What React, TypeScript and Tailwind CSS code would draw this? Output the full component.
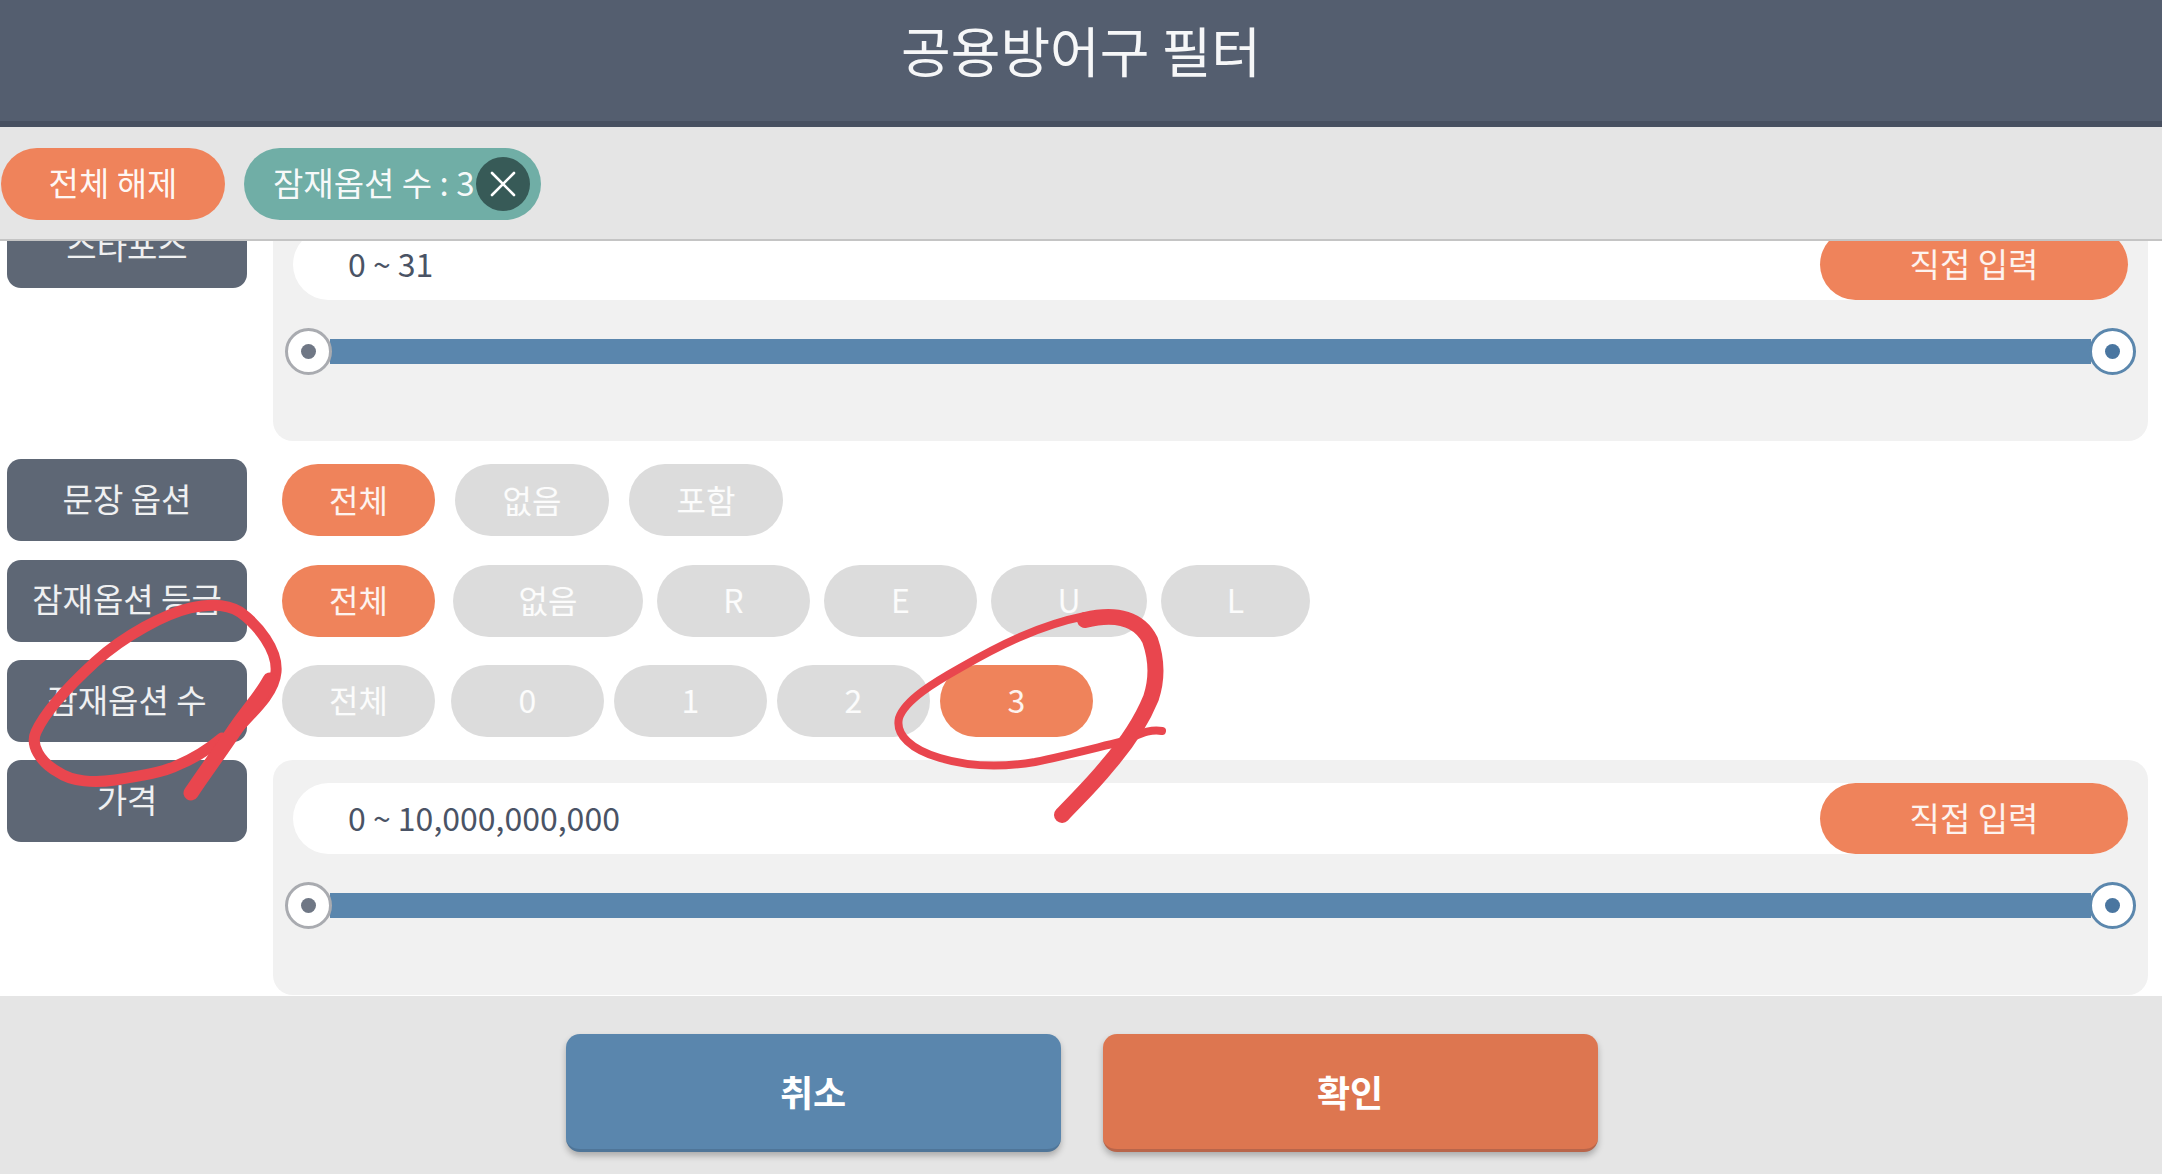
const fontStack = { fontFamily: '"Noto Sans CJK KR", "Noto Sans", sans-serif' };

type PillData = { text: string; width: number; active?: boolean; extra?: number };

function Label({ children }: { children: string }) {
  return (
    <div className="w-[240px] h-[82px] shrink-0 ml-[7px] pb-[3px] rounded-[14px] bg-[#5e6775] text-white/90 text-[33px] flex items-center justify-center">
      {children}
    </div>
  );
}

function Pill({ text, width, active, extra = 0 }: PillData) {
  return (
    <div
      style={{ width, marginLeft: extra }}
      className={`h-[72px] pb-[3px] rounded-full flex items-center justify-center text-[32px] text-white/90 ${active ? 'bg-[#ef835b]' : 'bg-[#dcdcdc]'}`}
    >
      {text}
    </div>
  );
}

function PillRow({ label, gap, pills }: { label: string; gap: number; pills: PillData[] }) {
  return (
    <div className="flex h-[82px]">
      <Label>{label}</Label>
      <div style={{ gap }} className="flex items-center ml-[35px]">
        {pills.map((p) => (
          <Pill key={p.text} {...p} />
        ))}
      </div>
    </div>
  );
}

function RangeRow({ label, value }: { label: string; value: string }) {
  return (
    <div className="flex shrink-0 h-[235px]">
      <Label>{label}</Label>
      <div className="ml-[26px] w-[1875px] rounded-[20px] bg-[#f1f1f1] pt-[23px] px-[12px]">
        <div className="mx-[8px] h-[71px] rounded-full bg-white flex items-center justify-between pl-[55px]">
          <span className="text-[32px] text-[#4a5365] pb-[4px]">{value}</span>
          <div className="w-[308px] h-[71px] pb-[2px] rounded-full bg-[#ef835b] text-white/90 text-[33px] flex items-center justify-center">
            직접 입력
          </div>
        </div>
        <div className="flex items-center mt-[28px]">
          <div className="relative z-10 w-[47px] h-[47px] shrink-0 rounded-full bg-white border-[3px] border-[#a9abb0] flex items-center justify-center">
            <div className="w-[15px] h-[15px] rounded-full bg-[#6f7785]" />
          </div>
          <div className="flex-1 h-[25px] -mx-[2px] bg-[#5a86ad]" />
          <div className="relative z-10 w-[47px] h-[47px] shrink-0 rounded-full bg-white border-[3px] border-[#5b87ad] flex items-center justify-center">
            <div className="w-[15px] h-[15px] rounded-full bg-[#4a76a0]" />
          </div>
        </div>
      </div>
    </div>
  );
}

export default function App() {
  return (
    <div style={fontStack} className="relative w-[2162px] h-[1174px] overflow-hidden bg-white flex flex-col">
      <header className="h-[127px] shrink-0 bg-[#545e6f] border-b-[6px] border-[#475060] flex items-center justify-center pb-[22px]">
        <h1 className="text-[54px] text-white/95 font-normal">공용방어구 필터</h1>
      </header>

      <div className="h-[114px] shrink-0 bg-[#e5e5e5] border-b-2 border-[#c4c4c4] flex items-center pl-[1px] pt-[1px] gap-[19px]">
        <div className="w-[224px] h-[72px] pb-[2px] rounded-full bg-[#ef835b] text-white/95 text-[33px] flex items-center justify-center">
          전체 해제
        </div>
        <div className="w-[297px] h-[72px] rounded-full bg-[#70aea6] text-white/95 text-[33px] flex items-center pl-[29px] pr-[11px] justify-between">
          <span className="whitespace-nowrap pb-[2px]">잠재옵션 수 : 3</span>
          <div className="w-[54px] h-[54px] shrink-0 rounded-full bg-[#375a57] flex items-center justify-center">
            <svg width="32" height="32" viewBox="0 0 32 32" fill="none" stroke="white" strokeWidth="2.6" strokeLinecap="round">
              <path d="M5 5 L27 27 M27 5 L5 27" />
            </svg>
          </div>
        </div>
      </div>

      <main className="flex-1 overflow-hidden">
        <div className="-mt-[35px] flex flex-col gap-[18.3px]">
          <RangeRow label="스타포스" value="0 ~ 31" />
          <PillRow
            label="문장 옵션"
            gap={20}
            pills={[
              { text: '전체', width: 153, active: true },
              { text: '없음', width: 154 },
              { text: '포함', width: 154 },
            ]}
          />
          <PillRow
            label="잠재옵션 등급"
            gap={14}
            pills={[
              { text: '전체', width: 153, active: true },
              { text: '없음', width: 190, extra: 4 },
              { text: 'R', width: 153 },
              { text: 'E', width: 153 },
              { text: 'U', width: 156 },
              { text: 'L', width: 149 },
            ]}
          />
          <PillRow
            label="잠재옵션 수"
            gap={10}
            pills={[
              { text: '전체', width: 153 },
              { text: '0', width: 153, extra: 6 },
              { text: '1', width: 153 },
              { text: '2', width: 153 },
              { text: '3', width: 153, active: true },
            ]}
          />
          <RangeRow label="가격" value="0 ~ 10,000,000,000" />
        </div>
      </main>

      <footer className="h-[178px] shrink-0 bg-[#e5e5e5] flex justify-center gap-[42px] pt-[38px] pl-[1px]">
        <div className="w-[495px] h-[118px] pb-[2px] rounded-[14px] bg-[#5a86ad] border-b-[3px] border-[#4f7598] shadow-[0_4px_6px_rgba(0,0,0,0.25)] text-white text-[36px] font-bold flex items-center justify-center">
          취소
        </div>
        <div className="w-[495px] h-[118px] pb-[2px] rounded-[14px] bg-[#dd7650] border-b-[3px] border-[#b8654a] shadow-[0_4px_6px_rgba(0,0,0,0.25)] text-white text-[36px] font-bold flex items-center justify-center">
          확인
        </div>
      </footer>

      {/* hand drawn red marks on top of the screenshot */}
      <svg className="absolute inset-0 pointer-events-none" width="2162" height="1174" viewBox="0 0 2162 1174" fill="none" stroke="#e9464e" strokeLinecap="round" strokeLinejoin="round">
        <path strokeWidth="11" d="M222 745 C252 712 274 695 276 672 C278 650 258 625 240 612 C226 603 208 604 190 608 C165 614 125 635 95 662 C70 685 45 712 36 732 C30 745 40 762 58 772 C72 782 95 783 115 780 C140 776 165 772 178 765 C195 758 210 748 222 738" />
        <path strokeWidth="15" d="M191 793 C205 772 220 752 236 728 C250 708 262 695 270 680" />
        <path strokeWidth="8" d="M1085 616 C1040 625 1000 645 960 668 C935 682 905 700 899 718 C895 735 912 750 940 758 C970 767 1005 767 1035 762 C1065 756 1095 748 1120 742 C1135 737 1148 728 1162 731" />
        <path strokeWidth="16" d="M1085 620 C1118 612 1140 620 1150 640 C1157 660 1157 680 1151 698 C1142 720 1128 742 1108 765 C1092 785 1076 800 1062 815" />
      </svg>
    </div>
  );
}
